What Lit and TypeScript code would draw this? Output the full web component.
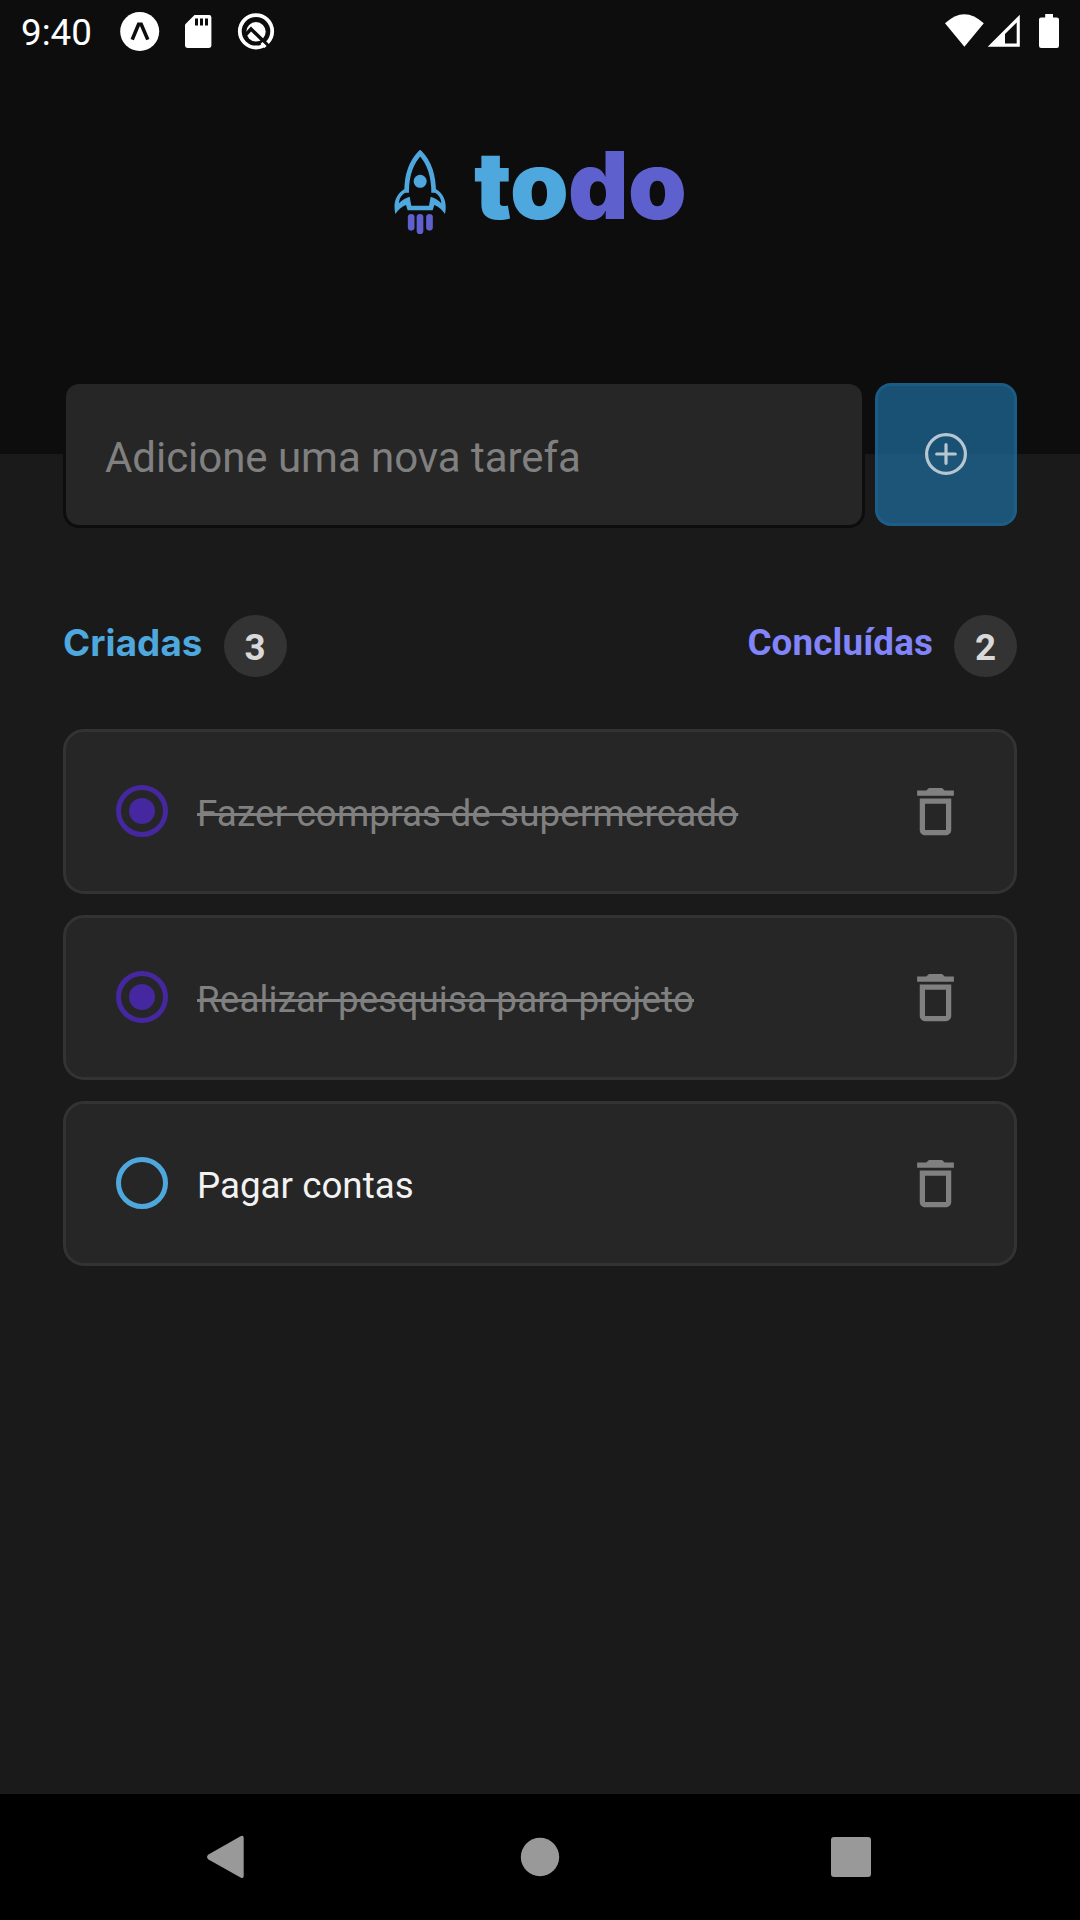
import { LitElement, html, css } from "lit";
import { customElement, property, state } from "lit/decorators.js";
import { classMap } from "lit/directives/class-map.js";

interface Task {
  title: string;
  done: boolean;
}

@customElement("status-bar")
class StatusBar extends LitElement {
  static styles = css`
    :host { display: flex; justify-content: space-between; height: 63px; padding: 0 21px; color: #fff; }
    .clock { font: 400 36.75px/66px Roboto, sans-serif; width: 99px; }
    .group { display: flex; }
    svg { display: block; }
  `;
  render() {
    return html`
      <div class="group">
        <div class="clock">9:40</div>
        <svg width="160" height="63" viewBox="120 0 160 63">
          <circle cx="139.7" cy="31.5" r="19.5" fill="#fff" />
          <path d="M132.2 39.6 L138.6 24.4 H141.2 L147.8 39.6" fill="none" stroke="#0d0d0d" stroke-width="3.6" />
          <path d="M194.5 15 H209 Q211.4 15 211.4 17.4 V45.6 Q211.4 48 209 48 H187.4 Q185 48 185 45.6 V24.5 Z" fill="#fff" />
          <path d="M195 18.5 h3 v7 h-3z M200 18.5 h3 v7 h-3z M205 18.5 h3 v7 h-3z" fill="#0d0d0d" />
          <circle cx="256" cy="31.3" r="16.2" fill="none" stroke="#fff" stroke-width="3.8" />
          <circle cx="256" cy="31.8" r="9.7" fill="#fff" />
          <path d="M245 35.5 L251 29 L268.5 46" fill="none" stroke="#0d0d0d" stroke-width="3.4" />
          <path d="M261.5 43 L265.5 47" stroke="#fff" stroke-width="3" />
        </svg>
      </div>
      <svg width="120" height="63" viewBox="939 0 120 63">
        <path d="M945 23.3 Q964.3 5 983.8 23.3 L964.4 46.7 Z" fill="#fff" />
        <path fill-rule="evenodd" d="M987.7 46.8 L1019.8 14.7 V46.8 Z M1005 43.6 H1016.7 V22.5 L1005 34 Z" fill="#fff" />
        <path d="M1045.2 14 h7.8 v3.4 h3.8 q2.2 0 2.2 2.2 v26.2 q0 2.2 -2.2 2.2 h-15.6 q-2.2 0 -2.2 -2.2 v-26.2 q0 -2.2 2.2 -2.2 h4 z" fill="#fff" />
      </svg>
    `;
  }
}

@customElement("todo-logo")
class TodoLogo extends LitElement {
  static styles = css`
    :host { display: flex; align-items: flex-start; gap: 28px; height: 84px; }
    svg { display: block; }
    .word { font: 900 94px/84px Inter, sans-serif; letter-spacing: -0.7px; color: #4ea8de; margin-top: -7px; white-space: nowrap; }
    .accent { color: #5e60ce; }
  `;
  render() {
    return html`
      <svg width="52" height="84" viewBox="41 60 156 252">
        <path d="M79 188 C78 130 97 92 119.5 69 C142 92 160 130 160 188" fill="none" stroke="#4ea8de" stroke-width="14" />
        <path fill="#4ea8de" d="M74 176 C48 191 37 216 45 252 C54 239 64 230 77 225 L82 241 H157 L162 225 C175 230 185 239 194 252 C201 216 191 191 165 176 L153 184 C172 190 182 201 183 220 C175 211 165 205 151 200 L146 227 H93 L88 200 C74 205 64 211 56 220 C57 201 67 190 86 184 Z" />
        <circle cx="119.5" cy="154" r="19.5" fill="#4ea8de" />
        <g fill="#5e60ce">
          <rect x="82.5" y="252" width="20" height="50" rx="10" />
          <rect x="109" y="252" width="20" height="60" rx="10" />
          <rect x="137.5" y="252" width="20" height="50" rx="10" />
        </g>
      </svg>
      <div class="word">to<span class="accent">do</span></div>
    `;
  }
}

@customElement("task-card")
class TaskCard extends LitElement {
  @property({ attribute: false }) task: Task = { title: "", done: false };

  static styles = css`
    :host {
      display: flex; align-items: center; box-sizing: border-box; height: 165px;
      padding: 0 47px 0 50px; border: 3px solid #333; border-radius: 21px; background: #262626;
    }
    .radio {
      display: grid; place-items: center; box-sizing: border-box; width: 52px; height: 52px; margin-bottom: 1px;
      border: 5px solid #4ea8de; border-radius: 50%;
    }
    .radio.done { border-color: #4527a0; }
    .dot { width: 26px; height: 26px; border-radius: 50%; background: #4527a0; }
    .title { flex: 1; padding: 4px 0 0 29px; font: 400 36.75px/44px Roboto, sans-serif; color: #f2f2f2; }
    .text.done { color: #808080; letter-spacing: 0.13px; text-decoration: line-through; text-decoration-thickness: 2.6px; }
    svg { display: block; fill: #808080; }
  `;
  render() {
    const done = this.task.done;
    return html`
      <div class=${classMap({ radio: true, done })}>${done ? html`<div class="dot"></div>` : ""}</div>
      <div class="title"><span class=${classMap({ text: true, done })}>${this.task.title}</span></div>
      <svg width="63" height="63" viewBox="0 0 24 24">
        <path d="M6 19c0 1.1.9 2 2 2h8c1.1 0 2-.9 2-2V7H6v12zM8 9h8v10H8V9zM15.5 4l-1-1h-5l-1 1H5v2h14V4z" />
      </svg>
    `;
  }
}

@customElement("nav-bar")
class NavBar extends LitElement {
  static styles = css`
    :host { display: block; height: 126px; background: #000; }
    svg { display: block; }
  `;
  render() {
    return html`
      <svg width="1080" height="126" viewBox="0 1794 1080 126" fill="#999">
        <path d="M208.5 1854.5 L240.5 1836.3 Q243.7 1834.8 243.7 1838 V1876 Q243.7 1879 240.5 1877.5 L208.5 1859.5 Q205.5 1857 208.5 1854.5 Z" />
        <circle cx="540" cy="1857" r="19.2" />
        <rect x="831" y="1837" width="40" height="40" rx="3" />
      </svg>
    `;
  }
}

@customElement("app-root")
class AppRoot extends LitElement {
  @state() tasks: Task[] = [
    { title: "Fazer compras de supermercado", done: true },
    { title: "Realizar pesquisa para projeto", done: true },
    { title: "Pagar contas", done: false },
  ];

  static styles = css`
    :host { display: flex; flex-direction: column; width: 1080px; height: 1920px; background: #1a1a1a; overflow: hidden; }
    .header { box-sizing: border-box; height: 454px; flex: none; background: #0d0d0d; }
    .brand { display: flex; justify-content: center; padding-top: 87px; }
    .form { display: flex; align-items: center; gap: 10px; height: 147px; padding: 0 63px; margin-top: -73px; }
    .field {
      flex: 1; min-width: 0; box-sizing: border-box; height: 147px; padding: 5px 39px 0; margin: 0;
      border: 3px solid #0d0d0d; border-radius: 16px; background: #262626; color: #f2f2f2;
      font: 400 42px/50px Roboto, sans-serif; letter-spacing: -0.04px; outline: none;
    }
    .field::placeholder { color: #808080; opacity: 1; }
    .add {
      display: grid; place-items: center; box-sizing: border-box; width: 142px; height: 143px; padding: 0 0 1px;
      border: 3px solid rgba(30, 111, 159, 0.4); border-radius: 16px; background: rgba(30, 111, 159, 0.7);
    }
    .add svg { display: block; }
    .main { flex: 1; display: flex; flex-direction: column; padding: 0 63px; }
    .summary { display: flex; justify-content: space-between; padding-top: 87px; }
    .stat { display: flex; align-items: flex-start; gap: 21px; height: 62px; font: 700 36.75px/56px Roboto, sans-serif; }
    .created { color: #4ea8de; font-family: Inter, sans-serif; letter-spacing: 0.1px; }
    .finished { color: #8284fa; letter-spacing: 0.15px; }
    .count {
      width: 63px; height: 62px; border-radius: 50%; background: #333; color: #d9d9d9; text-align: center;
      font: 700 36.75px/65px Roboto, sans-serif; letter-spacing: 0;
    }
    .list { display: flex; flex-direction: column; gap: 21px; padding-top: 52px; }
  `;

  render() {
    const finished = this.tasks.filter((t) => t.done).length;
    return html`
      <div class="header">
        <status-bar></status-bar>
        <div class="brand"><todo-logo></todo-logo></div>
      </div>
      <div class="form">
        <input class="field" placeholder="Adicione uma nova tarefa" />
        <button class="add">
          <svg width="44" height="44" viewBox="-22 -22 44 44" fill="none" stroke="#b7c7d2" stroke-width="3.2" stroke-linecap="round">
            <circle r="19.4" />
            <path d="M-9.3 0 H9.3 M0 -9.3 V9.3" />
          </svg>
        </button>
      </div>
      <div class="main">
        <div class="summary">
          <div class="stat created"><span>Criadas</span><div class="count">${this.tasks.length}</div></div>
          <div class="stat finished"><span>Concluídas</span><div class="count">${finished}</div></div>
        </div>
        <div class="list">${this.tasks.map((t) => html`<task-card .task=${t}></task-card>`)}</div>
      </div>
      <nav-bar></nav-bar>
    `;
  }
}
